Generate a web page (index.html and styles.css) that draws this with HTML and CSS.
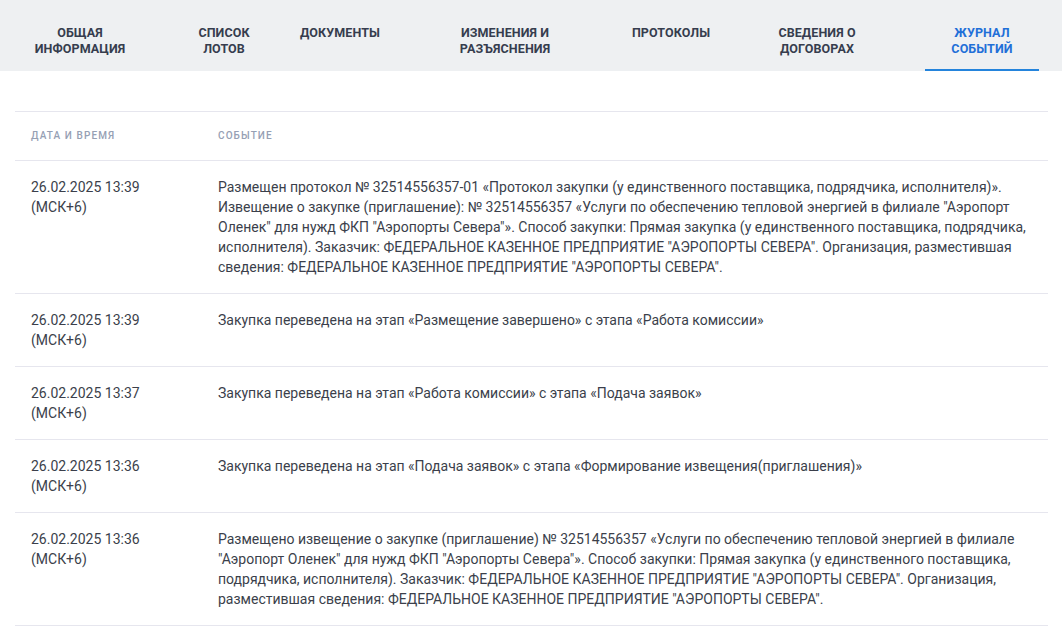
FILE: index.html
```html
<!DOCTYPE html>
<html lang="ru">
<head>
<meta charset="utf-8">
<title>Журнал событий</title>
<link rel="stylesheet" href="styles.css">
</head>
<body>
<nav class="tabs">
  <a class="tab"><span>Общая<br>информация</span></a>
  <a class="tab"><span>Список<br>лотов</span></a>
  <a class="tab"><span>Документы</span></a>
  <a class="tab"><span>Изменения и<br>разъяснения</span></a>
  <a class="tab"><span>Протоколы</span></a>
  <a class="tab"><span>Сведения о<br>договорах</span></a>
  <a class="tab tab-active"><span>Журнал<br>событий</span></a>
</nav>
<main class="content">
  <div class="journal">
    <div class="row row-head">
      <div class="cell cell-date">Дата и время</div>
      <div class="cell cell-event">Событие</div>
    </div>
    <div class="row">
      <div class="cell cell-date">26.02.2025 13:39<br>(МСК+6)</div>
      <div class="cell cell-event">Размещен протокол № 32514556357-01 «Протокол закупки (у единственного поставщика, подрядчика, исполнителя)». Извещение о закупке (приглашение): № 32514556357 «Услуги по обеспечению тепловой энергией в филиале "Аэропорт Оленек" для нужд ФКП "Аэропорты Севера"». Способ закупки: Прямая закупка (у единственного поставщика, подрядчика, исполнителя). Заказчик: ФЕДЕРАЛЬНОЕ КАЗЕННОЕ ПРЕДПРИЯТИЕ "АЭРОПОРТЫ СЕВЕРА". Организация, разместившая сведения: ФЕДЕРАЛЬНОЕ КАЗЕННОЕ ПРЕДПРИЯТИЕ "АЭРОПОРТЫ СЕВЕРА".</div>
    </div>
    <div class="row">
      <div class="cell cell-date">26.02.2025 13:39<br>(МСК+6)</div>
      <div class="cell cell-event">Закупка переведена на этап «Размещение завершено» с этапа «Работа комиссии»</div>
    </div>
    <div class="row">
      <div class="cell cell-date">26.02.2025 13:37<br>(МСК+6)</div>
      <div class="cell cell-event">Закупка переведена на этап «Работа комиссии» с этапа «Подача заявок»</div>
    </div>
    <div class="row">
      <div class="cell cell-date">26.02.2025 13:36<br>(МСК+6)</div>
      <div class="cell cell-event">Закупка переведена на этап «Подача заявок» с этапа «Формирование извещения(приглашения)»</div>
    </div>
    <div class="row">
      <div class="cell cell-date">26.02.2025 13:36<br>(МСК+6)</div>
      <div class="cell cell-event">Размещено извещение о закупке (приглашение) № 32514556357 «Услуги по обеспечению тепловой энергией в филиале "Аэропорт Оленек" для нужд ФКП "Аэропорты Севера"». Способ закупки: Прямая закупка (у единственного поставщика, подрядчика, исполнителя). Заказчик: ФЕДЕРАЛЬНОЕ КАЗЕННОЕ ПРЕДПРИЯТИЕ "АЭРОПОРТЫ СЕВЕРА". Организация, разместившая сведения: ФЕДЕРАЛЬНОЕ КАЗЕННОЕ ПРЕДПРИЯТИЕ "АЭРОПОРТЫ СЕВЕРА".</div>
    </div>
  </div>
</main>
</body>
</html>
```

FILE: styles.css
```css
* { box-sizing: border-box; }
html, body { margin: 0; padding: 0; background: #fff; }
body {
  font-family: Roboto, "Liberation Sans", sans-serif;
  color: #3b3f4b;
  overflow: hidden;
}
.tabs {
  display: grid;
  grid-template-columns: 130px 158px 74px 256px 76px 216px 114px;
  padding-left: 15px;
  height: 71px;
  background: #eef0f2;
}
.tab {
  display: flex;
  justify-content: center;
  align-items: flex-start;
  padding-top: 25px;
  text-align: center;
  white-space: nowrap;
  font-size: 12.5px;
  line-height: 16px;
  font-weight: 700;
  letter-spacing: 0.1px;
  text-transform: uppercase;
  color: #363d4e;
  height: 71px;
}
.tab-active {
  color: #1f6fd8;
  border-bottom: 2px solid #2484dc;
}
.content {
  padding: 40px 14px 0 15px;
}
.journal {
  border-top: 1px solid #e6e6ee;
}
.row {
  display: flex;
  border-bottom: 1px solid #e6e6ee;
  font-size: 14px;
  line-height: 20px;
}
.cell {
  padding: 16px 16px;
}
.cell-date {
  flex: 0 0 203px;
}
.cell-event {
  flex: 1 1 auto;
  padding-left: 0;
}
.row-head .cell {
  padding-top: 16px;
  padding-bottom: 16px;
  font-size: 10px;
  line-height: 16px;
  letter-spacing: 1.1px;
  text-transform: uppercase;
  color: #96a0b4;
  font-weight: 500;
}
```
